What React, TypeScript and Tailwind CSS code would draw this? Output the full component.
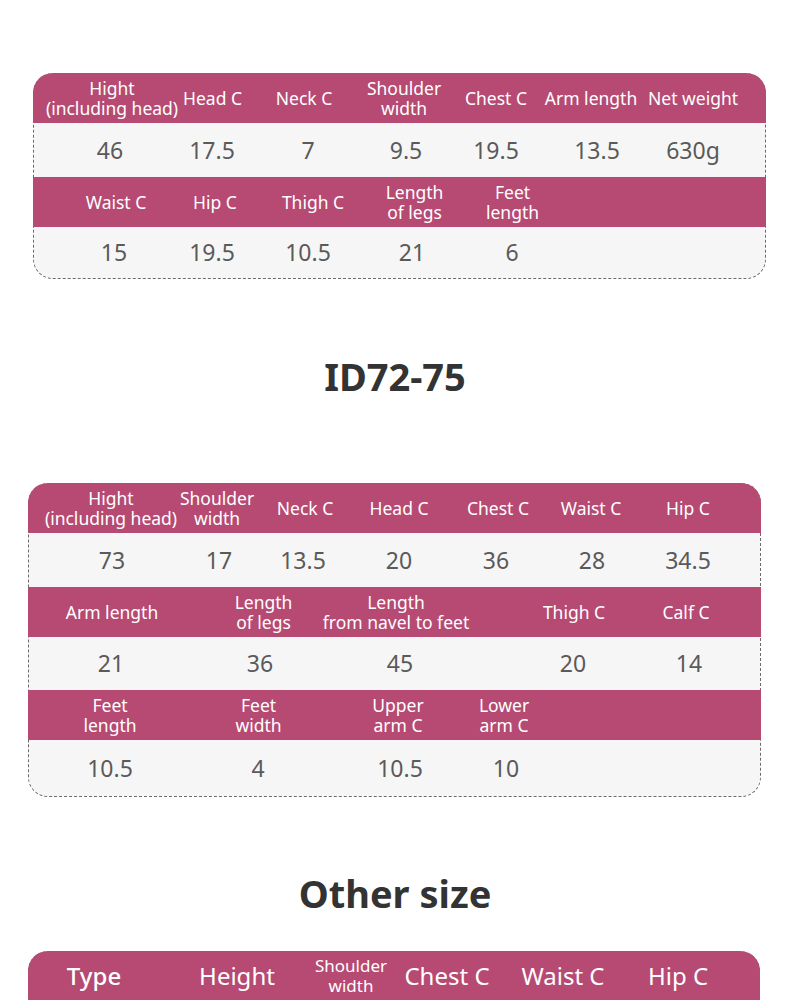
import React, { ReactNode } from "react";

type C = { ml: string; c: ReactNode };

function Cell({ ml, c }: C) {
  return (
    <div className={`flex w-0 shrink-0 justify-center ${ml}`}>
      <div className="whitespace-nowrap text-center">{c}</div>
    </div>
  );
}

function HeadRow({ cells, first = false }: { cells: C[]; first?: boolean }) {
  return (
    <div
      className={`-mx-px flex h-[50px] items-center bg-[#b64a73] px-px text-[17.5px] font-normal leading-[20px] text-white ${
        first ? "-mt-px rounded-t-[20px]" : ""
      }`}
    >
      {cells.map((x, i) => (
        <Cell key={i} {...x} />
      ))}
    </div>
  );
}

function DataRow({ cells, h }: { cells: C[]; h: string }) {
  return (
    <div className={`flex items-center text-[23px] leading-none text-[#5a5a5a] ${h}`}>
      {cells.map((x, i) => (
        <Cell key={i} {...x} />
      ))}
    </div>
  );
}

const two = (a: string, b: string) => (
  <>
    {a}
    <br />
    {b}
  </>
);

export default function App() {
  return (
    <div className="min-h-[1000px] bg-white pt-[73px] pb-[200px] font-['Noto_Sans',sans-serif]">
      {/* Table 1 */}
      <div className="ml-[33px] w-[733px] rounded-[20px] border border-dashed border-[#6b6b6b] bg-[#f6f6f6] bg-clip-padding">
        <HeadRow
          first
          cells={[
            { ml: "ml-[78px]", c: two("Hight", "(including head)") },
            { ml: "ml-[100.5px]", c: "Head C" },
            { ml: "ml-[91.5px]", c: "Neck C" },
            { ml: "ml-[100px]", c: two("Shoulder", "width") },
            { ml: "ml-[92px]", c: "Chest C" },
            { ml: "ml-[95px]", c: "Arm length" },
            { ml: "ml-[102px]", c: "Net weight" },
          ]}
        />
        <DataRow
          h="h-[54px]"
          cells={[
            { ml: "ml-[76px]", c: "46" },
            { ml: "ml-[102px]", c: "17.5" },
            { ml: "ml-[96px]", c: "7" },
            { ml: "ml-[98px]", c: "9.5" },
            { ml: "ml-[90px]", c: "19.5" },
            { ml: "ml-[101px]", c: "13.5" },
            { ml: "ml-[96px]", c: "630g" },
          ]}
        />
        <HeadRow
          cells={[
            { ml: "ml-[82px]", c: "Waist C" },
            { ml: "ml-[99px]", c: "Hip C" },
            { ml: "ml-[98px]", c: "Thigh C" },
            { ml: "ml-[101.5px]", c: two("Length", "of legs") },
            { ml: "ml-[98px]", c: two("Feet", "length") },
          ]}
        />
        <DataRow
          h="h-[51px]"
          cells={[
            { ml: "ml-[80px]", c: "15" },
            { ml: "ml-[98px]", c: "19.5" },
            { ml: "ml-[96px]", c: "10.5" },
            { ml: "ml-[104px]", c: "21" },
            { ml: "ml-[100px]", c: "6" },
          ]}
        />
      </div>

      <h2 className="mt-[71px] text-center text-[38px] font-bold leading-[52px] text-[#333333]">
        ID72-75
      </h2>

      {/* Table 2 */}
      <div className="mt-[81px] ml-[28px] w-[733px] rounded-[20px] border border-dashed border-[#6b6b6b] bg-[#f6f6f6] bg-clip-padding">
        <HeadRow
          first
          cells={[
            { ml: "ml-[82px]", c: two("Hight", "(including head)") },
            { ml: "ml-[106px]", c: two("Shoulder", "width") },
            { ml: "ml-[88px]", c: "Neck C" },
            { ml: "ml-[94px]", c: "Head C" },
            { ml: "ml-[99px]", c: "Chest C" },
            { ml: "ml-[93px]", c: "Waist C" },
            { ml: "ml-[97px]", c: "Hip C" },
          ]}
        />
        <DataRow
          h="h-[54px]"
          cells={[
            { ml: "ml-[83px]", c: "73" },
            { ml: "ml-[107px]", c: "17" },
            { ml: "ml-[84px]", c: "13.5" },
            { ml: "ml-[96px]", c: "20" },
            { ml: "ml-[97px]", c: "36" },
            { ml: "ml-[96px]", c: "28" },
            { ml: "ml-[96px]", c: "34.5" },
          ]}
        />
        <HeadRow
          cells={[
            { ml: "ml-[83px]", c: "Arm length" },
            { ml: "ml-[151.5px]", c: two("Length", "of legs") },
            { ml: "ml-[132.5px]", c: two("Length", "from navel to feet") },
            { ml: "ml-[178px]", c: "Thigh C" },
            { ml: "ml-[112px]", c: "Calf C" },
          ]}
        />
        <DataRow
          h="h-[53px]"
          cells={[
            { ml: "ml-[82px]", c: "21" },
            { ml: "ml-[149px]", c: "36" },
            { ml: "ml-[140px]", c: "45" },
            { ml: "ml-[173px]", c: "20" },
            { ml: "ml-[116px]", c: "14" },
          ]}
        />
        <HeadRow
          cells={[
            { ml: "ml-[81px]", c: two("Feet", "length") },
            { ml: "ml-[148.5px]", c: two("Feet", "width") },
            { ml: "ml-[139.5px]", c: two("Upper", "arm C") },
            { ml: "ml-[106px]", c: two("Lower", "arm C") },
          ]}
        />
        <DataRow
          h="h-[56px]"
          cells={[
            { ml: "ml-[81px]", c: "10.5" },
            { ml: "ml-[148px]", c: "4" },
            { ml: "ml-[142px]", c: "10.5" },
            { ml: "ml-[106px]", c: "10" },
          ]}
        />
      </div>

      <h2 className="mt-[70px] text-center text-[38px] font-bold leading-[52px] text-[#333333]">
        Other size
      </h2>

      {/* Table 3 */}
      <div className="mt-[32px] ml-[28px] w-[732px] rounded-[20px] border border-dashed border-[#6b6b6b] bg-[#f6f6f6] bg-clip-padding">
        <div className="-mx-px -mt-px flex h-[50px] items-center rounded-t-[20px] bg-[#b64a73] px-px text-[24px] leading-[20px] text-white">
          <Cell ml="ml-[65px]" c={<span className="font-medium">Type</span>} />
          <Cell ml="ml-[143px]" c="Height" />
          <Cell ml="ml-[114px]" c={<span className="block text-[17px] leading-[20px]">{two("Shoulder", "width")}</span>} />
          <Cell ml="ml-[96px]" c="Chest C" />
          <Cell ml="ml-[116px]" c="Waist C" />
          <Cell ml="ml-[115px]" c="Hip C" />
        </div>
        <div className="h-[120px]" />
      </div>
    </div>
  );
}
